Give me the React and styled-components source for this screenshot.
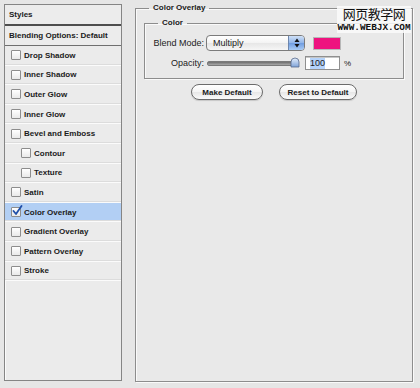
import React from 'react';
import styled, { createGlobalStyle } from 'styled-components';

const GlobalStyle = createGlobalStyle`
  html, body {
    margin: 0;
    padding: 0;
    background: #e6e6e6;
  }
  body {
    font-family: "Liberation Sans", Arial, sans-serif;
    color: #1b1b1b;
    width: 420px;
    height: 388px;
    overflow: hidden;
  }
`;

const Dialog = styled.div`
  display: flex;
  align-items: flex-start;
  gap: 13px;
  padding: 4px 0 0 4px;
  position: relative;
`;

const StylesPanel = styled.div`
  width: 116px;
  height: 375px;
  border: 1px solid #858585;
  box-shadow: inset 1px 1px 0 #fbfbfb;
  background: #ebebeb;
  display: flex;
  flex-direction: column;
`;

const HeaderRow = styled.div`
  height: ${p => p.$h}px;
  display: flex;
  align-items: center;
  padding-left: 4px;
  font-size: 8px;
  font-weight: bold;
  background: #ececec;
  border-bottom: ${p => p.$thick ? '2px solid #4e4e4e' : '1px solid #6f6f6f'};
  box-shadow: 0 1px 0 #fafafa;
  box-sizing: border-box;
`;

const EffectRow = styled.div`
  height: 19.6px;
  box-sizing: border-box;
  display: flex;
  align-items: center;
  gap: 3px;
  padding-left: ${p => 6 + (p.$indent ? 10 : 0)}px;
  font-size: 8px;
  font-weight: bold;
  background: ${p => p.$selected ? '#b2cff4' : '#ebebeb'};
  border-bottom: 1px solid #fbfbfb;
  box-shadow: inset 0 -1px 0 #dcdcdc;
`;

const Box = styled.span`
  position: relative;
  width: 8px;
  height: 8px;
  border: 1px solid #8d8d8d;
  border-radius: 1px;
  background: linear-gradient(#ffffff, #e9e9e9);
  flex: none;
`;

const Tick = styled.svg`
  position: absolute;
  left: 0px;
  top: -3px;
`;

const Group = styled.fieldset`
  margin: -1px 0 0 0;
  padding: 0 8px;
  width: 278px;
  height: 379px;
  box-sizing: border-box;
  border: 1px solid #8d8d8d;
  box-shadow: inset 1px 1px 0 #fafafa, 1px 1px 0 #fafafa;
  background: #e9e9e9;
  display: flex;
  flex-direction: column;
`;

const Legend = styled.legend`
  padding: 0 4px;
  margin-left: ${p => p.$offset}px;
  font-size: 8px;
  font-weight: bold;
  line-height: 10px;
`;

const InnerGroup = styled.fieldset`
  margin: 5px 0 0 0;
  padding: 7px 0 8px 0;
  border: 1px solid #8d8d8d;
  box-shadow: inset 1px 1px 0 #fafafa, 1px 1px 0 #fafafa;
  display: grid;
  grid-template-columns: 59px auto;
  column-gap: 2px;
  row-gap: 5px;
  align-items: center;
`;

const Label = styled.span`
  text-align: right;
  font-size: 9px;
  color: #222;
`;

const Controls = styled.div`
  display: flex;
  align-items: center;
  gap: ${p => p.$gap}px;
`;

const Select = styled.div`
  width: 99px;
  height: 16px;
  box-sizing: border-box;
  border: 1px solid #7b7b7b;
  border-radius: 4px;
  background: linear-gradient(#ffffff, #f3f3f3 50%, #e6e6e6 51%, #f6f6f6);
  display: flex;
  align-items: center;
  overflow: hidden;
  font-size: 9px;
`;

const SelectText = styled.span`
  flex: 1;
  padding-left: 6px;
`;

const Stepper = styled.span`
  width: 15px;
  height: 100%;
  border-left: 1px solid #6d86ad;
  background: linear-gradient(#cfe0f7, #8fb4e8 50%, #6f9ce0 51%, #a9ccf5);
  display: flex;
  align-items: center;
  justify-content: center;
`;

const Swatch = styled.span`
  width: 26px;
  height: 11px;
  background: #ee137f;
  border: 1px solid #b7b7b7;
`;

const Slider = styled.div`
  position: relative;
  width: 91px;
  height: 14px;
  margin-left: 1px;
  display: flex;
  align-items: center;
`;

const Track = styled.span`
  width: 100%;
  height: 3px;
  border-radius: 2px;
  background: linear-gradient(#6e6e6e, #a9a9a9);
  border: 1px solid #7a7a7a;
`;

const Thumb = styled.svg`
  position: absolute;
  right: -2px;
  top: 1px;
`;

const NumberField = styled.div`
  width: 35px;
  height: 14px;
  box-sizing: border-box;
  border: 1px solid #8f8f8f;
  box-shadow: inset 0 1px 0 #c6c6c6;
  background: #fff;
  display: flex;
  align-items: center;
  padding-left: 4px;
  font-size: 9px;
  margin-left: 3px;
`;

const Selection = styled.span`
  background: #b5d3fb;
  line-height: 11px;
`;

const Unit = styled.span`
  font-size: 8px;
`;

const ButtonRow = styled.div`
  display: flex;
  justify-content: center;
  gap: 16px;
  margin-top: 5px;
`;

const Button = styled.button`
  width: ${p => p.$w}px;
  height: 16px;
  padding: 0;
  border: 1px solid #6b6b6b;
  border-radius: 8px;
  background: linear-gradient(#ffffff, #f4f4f4 50%, #e7e7e7 51%, #fafafa);
  box-shadow: 0 1px 1px rgba(0,0,0,0.15);
  font-family: "Liberation Sans", Arial, sans-serif;
  font-size: 8px;
  font-weight: bold;
  color: #1b1b1b;
`;

const Watermark = styled.div`
  position: absolute;
  left: 337px;
  top: 6px;
  width: 74px;
  display: flex;
  flex-direction: column;
  align-items: center;
  gap: 3px;
  padding-bottom: 1px;
  background: rgba(250, 250, 250, 0.85);
`;

const WatermarkCn = styled.span`
  font-family: "Noto Sans CJK SC", sans-serif;
  font-size: 13px;
  line-height: 15px;
  letter-spacing: -0.5px;
  color: #111;
`;

const WatermarkEn = styled.span`
  font-family: "Liberation Mono", monospace;
  font-weight: bold;
  font-size: 9.4px;
  line-height: 8px;
  color: #111;
`;

const effects = [
  { name: 'Drop Shadow' },
  { name: 'Inner Shadow' },
  { name: 'Outer Glow' },
  { name: 'Inner Glow' },
  { name: 'Bevel and Emboss' },
  { name: 'Contour', indent: true },
  { name: 'Texture', indent: true },
  { name: 'Satin' },
  { name: 'Color Overlay', checked: true },
  { name: 'Gradient Overlay' },
  { name: 'Pattern Overlay' },
  { name: 'Stroke' },
];

export default function App() {
  return (
    <>
      <GlobalStyle />
      <Dialog>
        <StylesPanel>
          <HeaderRow $h={21} $thick>Styles</HeaderRow>
          <HeaderRow $h={20}>Blending Options: Default</HeaderRow>
          {effects.map(e => (
            <EffectRow key={e.name} $indent={e.indent} $selected={e.checked}>
              <Box>
                {e.checked && (
                  <Tick width="11" height="11" viewBox="0 0 11 11">
                    <path d="M1.5 6 L4 9 L9.5 1" fill="none" stroke="#1f4fa8" strokeWidth="1.8" strokeLinecap="round" strokeLinejoin="round" />
                  </Tick>
                )}
              </Box>
              {e.name}
            </EffectRow>
          ))}
        </StylesPanel>

        <Group>
          <Legend $offset={5}>Color Overlay</Legend>
          <InnerGroup>
            <Legend $offset={13}>Color</Legend>
            <Label>Blend Mode:</Label>
            <Controls $gap={8}>
              <Select>
                <SelectText>Multiply</SelectText>
                <Stepper>
                  <svg width="6" height="10" viewBox="0 0 6 10">
                    <path d="M3 0.5 L5.5 4 L0.5 4 Z" fill="#111" />
                    <path d="M3 9.5 L5.5 6 L0.5 6 Z" fill="#111" />
                  </svg>
                </Stepper>
              </Select>
              <Swatch />
            </Controls>
            <Label>Opacity:</Label>
            <Controls $gap={4}>
              <Slider>
                <Track />
                <Thumb width="10" height="11" viewBox="0 0 10 11">
                  <defs>
                    <linearGradient id="thumbFill" x1="0" y1="0" x2="0" y2="1">
                      <stop offset="0" stopColor="#e4eefc" />
                      <stop offset="1" stopColor="#7fa3d8" />
                    </linearGradient>
                  </defs>
                  <path d="M1 10 L1 5 Q1 1 5 1 Q9 1 9 5 L9 10 Z" fill="url(#thumbFill)" stroke="#55688a" strokeWidth="0.8" />
                </Thumb>
              </Slider>
              <NumberField><Selection>100</Selection></NumberField>
              <Unit>%</Unit>
            </Controls>
          </InnerGroup>
          <ButtonRow>
            <Button $w={72}>Make Default</Button>
            <Button $w={78}>Reset to Default</Button>
          </ButtonRow>
        </Group>

        <Watermark>
          <WatermarkCn>网页教学网</WatermarkCn>
          <WatermarkEn>WWW.WEBJX.COM</WatermarkEn>
        </Watermark>
      </Dialog>
    </>
  );
}
